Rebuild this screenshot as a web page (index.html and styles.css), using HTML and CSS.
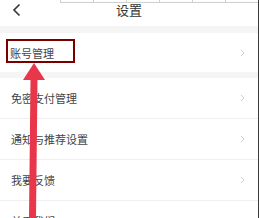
FILE: index.html
```html
<!DOCTYPE html>
<html lang="zh">
<head>
<meta charset="utf-8">
<link rel="stylesheet" href="styles.css">
</head>
<body>
<div class="page">
  <div class="grid-top">
    <span></span><span></span><span></span><span></span><span></span><span></span>
  </div>
  <header class="nav">
    <svg class="back" width="10" height="14" viewBox="0 0 10 14"><path d="M7.5 1.5 L2 7 L7.5 12.5" fill="none" stroke="#333" stroke-width="1.6"/></svg>
    <div class="title">设置</div>
  </header>
  <div class="gap gap-top"></div>
  <div class="row first">
    <span class="label">账号管理</span>
    <svg class="chev" width="5" height="8" viewBox="0 0 5 8"><path d="M1 1 L4 4 L1 7" fill="none" stroke="#cfcfcf" stroke-width="1"/></svg>
  </div>
  <div class="gap gap-mid"></div>
  <div class="row"><span class="label">免密支付管理</span><svg class="chev" width="5" height="8" viewBox="0 0 5 8"><path d="M1 1 L4 4 L1 7" fill="none" stroke="#cfcfcf" stroke-width="1"/></svg></div>
  <div class="row"><span class="label">通知与推荐设置</span><svg class="chev" width="5" height="8" viewBox="0 0 5 8"><path d="M1 1 L4 4 L1 7" fill="none" stroke="#cfcfcf" stroke-width="1"/></svg></div>
  <div class="row"><span class="label">我要反馈</span><svg class="chev" width="5" height="8" viewBox="0 0 5 8"><path d="M1 1 L4 4 L1 7" fill="none" stroke="#cfcfcf" stroke-width="1"/></svg></div>
  <div class="row"><span class="label">关于我们</span><svg class="chev" width="5" height="8" viewBox="0 0 5 8"><path d="M1 1 L4 4 L1 7" fill="none" stroke="#cfcfcf" stroke-width="1"/></svg></div>
  <div class="highlight"></div>
  <svg class="arrow" width="259" height="218" viewBox="0 0 259 218">
    <polygon points="29,218 36,218 37.5,79 30.5,79" fill="#e8364b"/>
    <polygon points="34,63 45,80 23,80" fill="#e8364b"/>
  </svg>
</div>
</body>
</html>
```
FILE: styles.css
```css
html, body {
  margin: 0;
  padding: 0;
  background: #fff;
}
body {
  font-family: "Noto Sans CJK SC", "Noto Sans", sans-serif;
  color: #333;
}
.page {
  position: relative;
  width: 258px;
  height: 218px;
  overflow: hidden;
  border-right: 1px solid #3a3a3a;
  background: #fff;
}
.grid-top {
  position: absolute;
  left: 60px;
  top: 0;
  display: flex;
  border-bottom: 1px solid #cfcfcf;
  height: 2px;
}
.grid-top span {
  width: 32px;
  height: 2px;
  border-left: 1px solid #cfcfcf;
}
.nav {
  height: 26px;
  display: flex;
  align-items: center;
  justify-content: center;
  position: relative;
}
.back {
  position: absolute;
  left: 12px;
  top: 3px;
}
.title {
  font-size: 13px;
  line-height: 18px;
  margin-top: -6px;
  color: #333;
}
.gap {
  background: #f5f5f5;
}
.gap-top { height: 7px; }
.gap-mid { height: 6px; }
.row {
  height: 40px;
  display: flex;
  align-items: center;
  justify-content: space-between;
  padding: 0 11px 0 11px;
  border-bottom: 1px solid #efefef;
}
.row.first {
  height: 39px;
  border-bottom: none;
  padding-left: 10px;
}
.label {
  font-size: 11px;
  color: #444;
}
.chev {
  margin-right: 2px;
}
.highlight {
  position: absolute;
  left: 6px;
  top: 39px;
  width: 65px;
  height: 20px;
  border: 2px solid #7a0000;
}
.arrow {
  position: absolute;
  left: 0;
  top: 0;
}
```
